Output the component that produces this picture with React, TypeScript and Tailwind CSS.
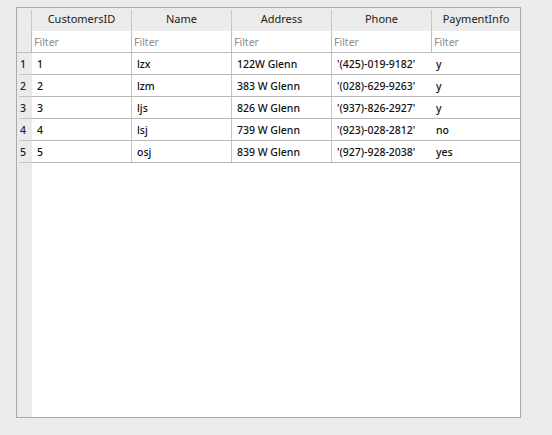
import React from "react";

const cols = ["CustomersID", "Name", "Address", "Phone", "PaymentInfo"];
const rows = [
  ["1", "lzx", "122W Glenn", "'(425)-019-9182'", "y"],
  ["2", "lzm", "383 W Glenn", "'(028)-629-9263'", "y"],
  ["3", "ljs", "826 W Glenn", "'(937)-826-2927'", "y"],
  ["4", "lsj", "739 W Glenn", "'(923)-028-2812'", "no"],
  ["5", "osj", "839 W Glenn", "'(927)-928-2038'", "yes"],
];

export default function App() {
  return (
    <div
      className="w-[552px] h-[435px] bg-[#ececec] pt-[7px] pl-[16px]"
      style={{ fontFamily: '"Noto Sans", "Open Sans", sans-serif' }}
    >
      <div className="w-[505px] h-[411px] border border-[#a9a9a9] bg-[#ebebeb] flex flex-col overflow-hidden">
        {/* header */}
        <div className="flex h-[23px] shrink-0 bg-[#ebebeb]">
          <div className="w-[14px] shrink-0" />
          {cols.map((c, i) => (
            <div
              key={c}
              className={`${i === 4 ? "flex-1" : "w-[100px]"} shrink-0 border-l border-[#c6c6c6] mt-[2px] flex items-center justify-center text-[11px] text-[#222] leading-none pb-[4px]`}
            >
              {c}
            </div>
          ))}
        </div>
        {/* filter row */}
        <div className="flex h-[22px] shrink-0 border-b border-[#bdbdbd]">
          <div className="w-[14px] shrink-0" />
          {cols.map((c, i) => (
            <div
              key={c}
              className={`${i === 4 ? "flex-1" : "w-[100px]"} shrink-0 border-l border-[#bdbdbd] bg-white flex items-center pl-[2px] pt-[1px] text-[10.5px] text-[#8b8b8b] leading-none`}
            >
              Filter
            </div>
          ))}
        </div>
        {/* data rows */}
        {rows.map((r, ri) => (
          <div key={ri} className="flex h-[22px] shrink-0">
            <div className="w-[15px] shrink-0 flex flex-col">
              <div className="flex-1 flex items-center pl-[3px] pt-[1px] text-[10.5px] font-medium text-[#222] leading-none">
                {ri + 1}
              </div>
              <div className="h-px ml-[2px] bg-[#c4c4c4]" />
            </div>
            <div className="flex-1 flex bg-white border-b border-[#b8b8b8]">
              {r.map((v, ci) => (
                <div
                  key={ci}
                  className={`${ci === 4 ? "flex-1" : ci === 0 ? "w-[99px]" : "w-[100px] border-l border-[#c4c4c4]"} shrink-0 flex items-center pl-[5px] pt-[1px] text-[10.5px] font-medium text-[#111] leading-none`}
                >
                  {v}
                </div>
              ))}
            </div>
          </div>
        ))}
        {/* empty area */}
        <div className="flex flex-1">
          <div className="w-[15px] shrink-0" />
          <div className="flex-1 bg-white" />
        </div>
      </div>
    </div>
  );
}
